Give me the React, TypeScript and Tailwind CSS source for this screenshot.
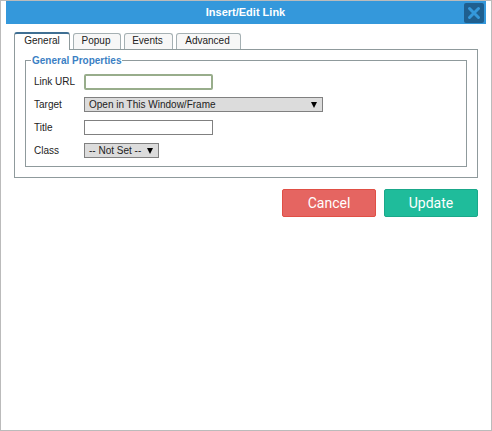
const tabs = [
  { label: "Popup", width: "w-[48px]" },
  { label: "Events", width: "w-[49px]" },
  { label: "Advanced", width: "w-[65px]" },
];

function Row({ label, children }: { label: string; children: React.ReactNode }) {
  return (
    <div className="flex h-[23px] items-center">
      <label className="w-[50px] text-[10px] text-[#222]">{label}</label>
      {children}
    </div>
  );
}

function Select({ value, width }: { value: string; width: string }) {
  return (
    <div className={`flex h-[15px] items-center justify-between border border-[#808080] bg-[#dcdcdc] pl-[4px] pr-[5px] text-[10px] text-[#222] ${width}`}>
      <span>{value}</span>
      <span className="h-0 w-0 border-x-[3px] border-t-[6px] border-x-transparent border-t-black" />
    </div>
  );
}

export default function App() {
  return (
    <div className="flex h-[431px] w-[492px] flex-col border border-[#bbbbbb] bg-white font-['Liberation_Sans',sans-serif]">
      <header className="mx-[5px] flex h-[23px] shrink-0 items-center bg-[#3498db] pr-[2px]">
        <div className="flex-1 pl-[21px] text-center text-[11px] font-bold text-white">Insert/Edit Link</div>
        <button className="flex h-[20px] w-[20px] items-center justify-center rounded-[2px] bg-[#1f5f8f]" aria-label="Close">
          <svg width="14" height="14" viewBox="0 0 14 14">
            <path d="M2.5 2.5 11.5 11.5M11.5 2.5 2.5 11.5" stroke="#3498db" strokeWidth="3" strokeLinecap="round" />
          </svg>
        </button>
      </header>

      <div className="mx-[13px] mt-[7px] flex h-[18px] items-end gap-[3px]">
        <div className="relative z-10 -mb-px flex h-[18px] w-[56px] items-center justify-center rounded-t-[3px] border border-t-2 border-b-0 border-[#8f9a9c] border-t-[#3f6f93] bg-white pb-[3px] text-[10px] text-[#222]">General</div>
        {tabs.map((tab) => (
          <div
            key={tab.label}
            className={`flex h-[16px] items-center justify-center rounded-t-[3px] border border-b-0 border-[#a5b0b3] bg-[#f7f7f7] pr-[2px] pb-[2px] text-[10px] text-[#222] ${tab.width}`}
          >
            {tab.label}
          </div>
        ))}
      </div>

      <div className="mx-[13px] h-[129px] border border-[#8f9a9c] px-[10px] pt-[4px]">
        <fieldset className="h-[113px] border border-[#8f9a9c] pl-[8px]">
          <legend className="ml-[-3px] px-[1px] text-[10px] font-bold leading-[13px] text-[#3b7fc4]">General Properties</legend>
          <div className="mt-[3px] flex flex-col">
            <Row label="Link URL">
              <input className="h-[16px] w-[129px] rounded-[2px] border-2 border-[#98ad8b] bg-white outline-none" />
            </Row>
            <Row label="Target">
              <Select value="Open in This Window/Frame" width="w-[239px]" />
            </Row>
            <Row label="Title">
              <input className="h-[15px] w-[129px] border border-[#808080] bg-white outline-none" />
            </Row>
            <Row label="Class">
              <Select value="-- Not Set --" width="w-[75px]" />
            </Row>
          </div>
        </fieldset>
      </div>

      <div className="mx-[13px] mt-[11px] flex justify-end gap-[8px] font-['Roboto',sans-serif] text-[14px] text-white">
        <button className="h-[28px] w-[94px] rounded-[2px] border border-[#e04f45] bg-[#e56561]">Cancel</button>
        <button className="h-[28px] w-[94px] rounded-[2px] border border-[#1aa88a] bg-[#1fbc9b]">Update</button>
      </div>
    </div>
  );
}
